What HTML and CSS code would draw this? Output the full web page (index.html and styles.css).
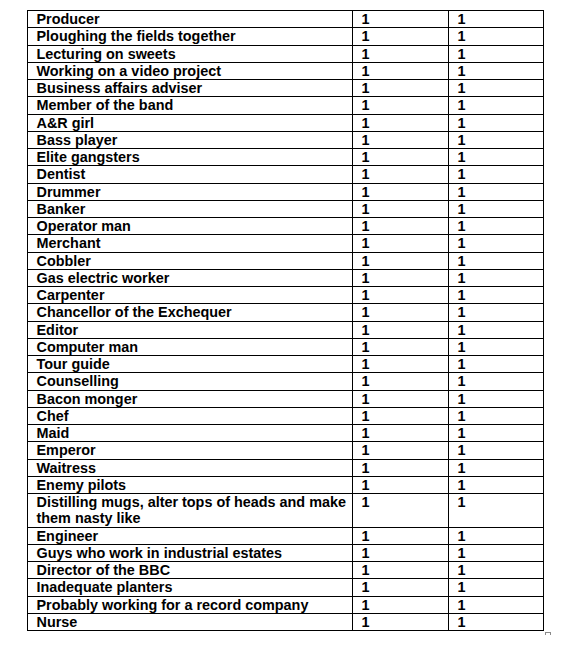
FILE: index.html
```html
<!DOCTYPE html>
<html>
<head>
<meta charset="utf-8">
<link rel="stylesheet" href="styles.css">
</head>
<body>
<div class="wrap">
<table class="grid">
<colgroup><col class="c1"><col class="c2"><col class="c3"></colgroup>
<tbody>
<tr><td>Producer</td><td>1</td><td>1</td></tr>
<tr><td>Ploughing the fields together</td><td>1</td><td>1</td></tr>
<tr><td>Lecturing on sweets</td><td>1</td><td>1</td></tr>
<tr><td>Working on a video project</td><td>1</td><td>1</td></tr>
<tr><td>Business affairs adviser</td><td>1</td><td>1</td></tr>
<tr><td>Member of the band</td><td>1</td><td>1</td></tr>
<tr><td>A&amp;R girl</td><td>1</td><td>1</td></tr>
<tr><td>Bass player</td><td>1</td><td>1</td></tr>
<tr><td>Elite gangsters</td><td>1</td><td>1</td></tr>
<tr><td>Dentist</td><td>1</td><td>1</td></tr>
<tr><td>Drummer</td><td>1</td><td>1</td></tr>
<tr><td>Banker</td><td>1</td><td>1</td></tr>
<tr><td>Operator man</td><td>1</td><td>1</td></tr>
<tr><td>Merchant</td><td>1</td><td>1</td></tr>
<tr><td>Cobbler</td><td>1</td><td>1</td></tr>
<tr><td>Gas electric worker</td><td>1</td><td>1</td></tr>
<tr><td>Carpenter</td><td>1</td><td>1</td></tr>
<tr><td>Chancellor of the Exchequer</td><td>1</td><td>1</td></tr>
<tr><td>Editor</td><td>1</td><td>1</td></tr>
<tr><td>Computer man</td><td>1</td><td>1</td></tr>
<tr><td>Tour guide</td><td>1</td><td>1</td></tr>
<tr><td>Counselling</td><td>1</td><td>1</td></tr>
<tr><td>Bacon monger</td><td>1</td><td>1</td></tr>
<tr><td>Chef</td><td>1</td><td>1</td></tr>
<tr><td>Maid</td><td>1</td><td>1</td></tr>
<tr><td>Emperor</td><td>1</td><td>1</td></tr>
<tr><td>Waitress</td><td>1</td><td>1</td></tr>
<tr><td>Enemy pilots</td><td>1</td><td>1</td></tr>
<tr><td>Distilling mugs, alter tops of heads and make them nasty like</td><td>1</td><td>1</td></tr>
<tr><td>Engineer</td><td>1</td><td>1</td></tr>
<tr><td>Guys who work in industrial estates</td><td>1</td><td>1</td></tr>
<tr><td>Director of the BBC</td><td>1</td><td>1</td></tr>
<tr><td>Inadequate planters</td><td>1</td><td>1</td></tr>
<tr><td>Probably working for a record company</td><td>1</td><td>1</td></tr>
<tr><td>Nurse</td><td>1</td><td>1</td></tr>
</tbody>
</table>
<span class="handle"></span>
</div>
</body>
</html>
```
FILE: styles.css
```css
html, body {
  margin: 0;
  padding: 0;
  background: #fff;
}
body {
  padding: 10px 0 0 27px;
  font-family: "Liberation Sans", Arial, sans-serif;
  color: #000;
}
.wrap {
  position: relative;
  display: inline-block;
}
.grid {
  border-collapse: collapse;
  table-layout: fixed;
  width: 516px;
  font-size: 14.4px;
  font-weight: bold;
}
.c1 { width: 325px; }
.c2 { width: 96px; }
.c3 { width: 95px; }
.grid td {
  border: 1px solid #000;
  padding: 0 2px 0 8.5px;
  line-height: 16.25px;
  vertical-align: top;
  text-align: left;
}
.handle {
  position: absolute;
  right: -7px;
  bottom: -7px;
  width: 4px;
  height: 4px;
  border: 1px solid #8a8a8a;
  background: #fff;
}
```
